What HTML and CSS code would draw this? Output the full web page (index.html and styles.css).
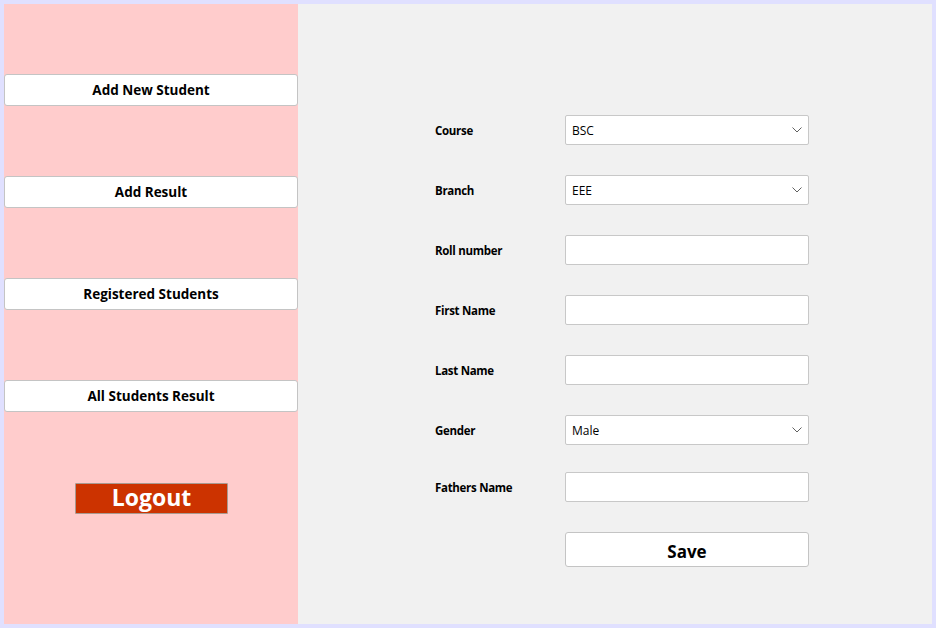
FILE: index.html
```html
<!DOCTYPE html>
<html>
<head>
<meta charset="utf-8">
<link rel="stylesheet" href="styles.css">
</head>
<body>
<div class="window">
  <aside class="sidebar">
    <button class="nav-btn">Add New Student</button>
    <button class="nav-btn">Add Result</button>
    <button class="nav-btn">Registered Students</button>
    <button class="nav-btn">All Students Result</button>
    <button class="logout-btn">Logout</button>
  </aside>
  <main class="main">
    <form class="form">
      <div class="row">
        <label class="label">Course</label>
        <div class="field select"><span>BSC</span><svg class="chev" width="10" height="6" viewBox="0 0 10 6"><path d="M0.5 0.5 L5 5 L9.5 0.5" fill="none" stroke="#606060" stroke-width="1"/></svg></div>
      </div>
      <div class="row">
        <label class="label">Branch</label>
        <div class="field select"><span>EEE</span><svg class="chev" width="10" height="6" viewBox="0 0 10 6"><path d="M0.5 0.5 L5 5 L9.5 0.5" fill="none" stroke="#606060" stroke-width="1"/></svg></div>
      </div>
      <div class="row">
        <label class="label">Roll number</label>
        <div class="field"></div>
      </div>
      <div class="row">
        <label class="label">First Name</label>
        <div class="field"></div>
      </div>
      <div class="row">
        <label class="label">Last Name</label>
        <div class="field"></div>
      </div>
      <div class="row">
        <label class="label">Gender</label>
        <div class="field select"><span>Male</span><svg class="chev" width="10" height="6" viewBox="0 0 10 6"><path d="M0.5 0.5 L5 5 L9.5 0.5" fill="none" stroke="#606060" stroke-width="1"/></svg></div>
      </div>
      <div class="row row-tight">
        <label class="label">Fathers Name</label>
        <div class="field"></div>
      </div>
      <div class="row">
        <span class="label"></span>
        <button type="button" class="save-btn">Save</button>
      </div>
    </form>
  </main>
</div>
</body>
</html>
```
FILE: styles.css
```css
html, body {
  margin: 0;
  padding: 0;
}
body {
  width: 936px;
  height: 628px;
  background: #e0e0ff;
  font-family: "Open Sans", "Noto Sans", sans-serif;
  overflow: hidden;
}
.window {
  box-sizing: border-box;
  margin: 4px;
  width: 928px;
  height: 620px;
  display: flex;
}
.sidebar {
  width: 294px;
  background: #ffcccc;
  display: flex;
  flex-direction: column;
  align-items: center;
  padding-top: 70px;
  gap: 70px;
  box-sizing: border-box;
}
.nav-btn {
  width: 294px;
  height: 32px;
  align-self: flex-start;
  background: #ffffff;
  border: 1px solid #c4c4c4;
  border-radius: 3px;
  font-family: inherit;
  font-weight: 700;
  font-size: 13.5px;
  color: #000;
  padding: 0;
  letter-spacing: 0;
}
.logout-btn {
  width: 153px;
  height: 31px;
  margin-top: 1px;
  background: #cc3300;
  border: 1px solid #a89a90;
  border-radius: 1px;
  color: #fff;
  font-family: inherit;
  font-weight: 700;
  font-size: 23px;
  line-height: 1;
  padding: 0 0 2px 0;
  margin-left: 1px;
}
.main {
  flex: 1;
  background: #f1f1f1;
  padding: 111px 0 0 137px;
  box-sizing: border-box;
}
.form {
  display: flex;
  flex-direction: column;
  gap: 30px;
}
.row {
  display: flex;
  align-items: center;
  height: 30px;
}
.row-tight {
  margin-top: -3px;
}
.label {
  width: 130px;
  font-size: 11.5px;
  font-weight: 700;
  color: #000;
  letter-spacing: -0.3px;
}
.field {
  box-sizing: border-box;
  width: 244px;
  height: 30px;
  background: #fff;
  border: 1px solid #c8c8c8;
  border-radius: 2px;
}
.select {
  display: flex;
  align-items: center;
  justify-content: space-between;
  padding: 0 6px 0 6px;
  font-size: 12px;
  color: #000;
}
.save-btn {
  box-sizing: border-box;
  width: 244px;
  height: 35px;
  margin-top: 5px;
  background: #fff;
  border: 1px solid #c4c4c4;
  border-radius: 3px;
  font-family: inherit;
  font-weight: 700;
  font-size: 17px;
  color: #000;
  padding: 3px 0 0 0;
}
```
